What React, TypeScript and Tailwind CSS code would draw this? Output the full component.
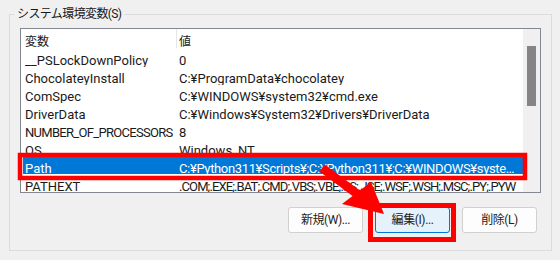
import React from 'react';

const rows: [string, string][] = [
  ['__PSLockDownPolicy', '0'],
  ['ChocolateyInstall', 'C:¥ProgramData¥chocolatey'],
  ['ComSpec', 'C:¥WINDOWS¥system32¥cmd.exe'],
  ['DriverData', 'C:¥Windows¥System32¥Drivers¥DriverData'],
  ['NUMBER_OF_PROCESSORS', '8'],
  ['OS', 'Windows_NT'],
  ['Path', 'C:¥Python311¥Scripts¥;C:¥Python311¥;C:¥WINDOWS¥system32;C:¥WINDOWS'],
  ['PATHEXT', '.COM;.EXE;.BAT;.CMD;.VBS;.VBE;.JS;.JSE;.WSF;.WSH;.MSC;.PY;.PYW'],
];

const font = { fontFamily: 'Roboto, "Noto Sans CJK JP", sans-serif' };

const valueClass = (name: string) => {
  if (name === 'PATHEXT')
    return 'flex-1 min-w-0 pl-[2px] whitespace-nowrap overflow-hidden leading-none pt-[7px] tracking-[-0.9px]';
  if (name === 'Path')
    return 'flex-1 min-w-0 pl-[2px] whitespace-nowrap overflow-hidden text-ellipsis leading-none pt-[7px] tracking-[-0.35px]';
  return 'flex-1 min-w-0 pl-[2px] whitespace-nowrap overflow-hidden text-ellipsis leading-none pt-[7px]';
};

const App = () => {
  return (
    <div
      className="relative w-[560px] h-[260px] bg-[#f0f0f0] text-[13px] text-[#1a1a1a] overflow-hidden"
      style={font}
    >
      <fieldset className="absolute left-[9px] top-[6px] w-[542px] h-[245px] border border-[#dcdcdc] px-[10px] pt-[0px] m-0">
        <legend className="ml-[-6px] px-[3px] leading-[17px] text-[12px] tracking-[-0.6px]">システム環境変数(S)</legend>

        {/* list view */}
        <div className="mt-[5px] w-[521px] h-[165px] border border-[#828790] bg-white flex overflow-hidden">
          <div className="flex-1 pl-[2px] min-w-0">
            <div className="flex h-[19px] items-center">
              <div className="w-[153px] pl-[2px] leading-none pt-[7px] text-[12px]">変数</div>
              <div className="w-px h-full bg-[#e5e5e5]" />
              <div className="flex-1 pl-[2px] leading-none pt-[7px] text-[12px]">値</div>
            </div>
            {rows.map(([name, value]) => {
              const sel = name === 'Path';
              return (
                <div
                  key={name}
                  className={
                    sel
                      ? 'flex h-[18px] items-center bg-[#0078d7] text-white'
                      : 'flex h-[18px] items-center'
                  }
                >
                  <div
                    className={
                      name === 'NUMBER_OF_PROCESSORS'
                        ? 'w-[154px] pl-[2px] whitespace-nowrap leading-none pt-[7px] overflow-hidden tracking-[-0.7px]'
                        : 'w-[154px] pl-[2px] whitespace-nowrap leading-none pt-[7px] overflow-hidden'
                    }
                  >
                    {name}
                  </div>
                  <div className={valueClass(name)}>{value}</div>
                </div>
              );
            })}
          </div>
          {/* scrollbar */}
          <div className="w-[17px] h-full bg-[#f0f0f0] pt-[17px] pl-[4px]">
            <div className="w-[9px] h-[60px] bg-[#858585]" />
          </div>
        </div>

        {/* buttons */}
        <div className="flex justify-end gap-[12px] mt-[14px] pr-[4px] text-[12px] tracking-[-0.4px] text-[#222]">
          <button className="w-[75px] h-[26px] bg-[#fdfdfd] border border-[#d0d0d0] rounded-[3px]">
            新規(W)...
          </button>
          <button className="w-[75px] h-[26px] bg-[#e5f1fb] border border-[#0078d7] rounded-[3px]">
            編集(I)...
          </button>
          <button className="w-[75px] h-[26px] bg-[#fdfdfd] border border-[#d0d0d0] rounded-[3px]">
            削除(L)
          </button>
        </div>
      </fieldset>

      {/* annotation overlay */}
      <svg className="absolute inset-0 pointer-events-none" width="560" height="260" viewBox="0 0 560 260">
        <rect x="20" y="155" width="505" height="23" fill="none" stroke="#ff0000" strokeWidth="4.5" />
        <rect x="370.5" y="205.5" width="83" height="34" fill="none" stroke="#ff0000" strokeWidth="5" />
        <line x1="322" y1="168" x2="360" y2="196" stroke="#ff0000" strokeWidth="9" />
        <polygon points="342,204 371,182 384,214" fill="#ff0000" />
      </svg>
    </div>
  );
};

export default App;
